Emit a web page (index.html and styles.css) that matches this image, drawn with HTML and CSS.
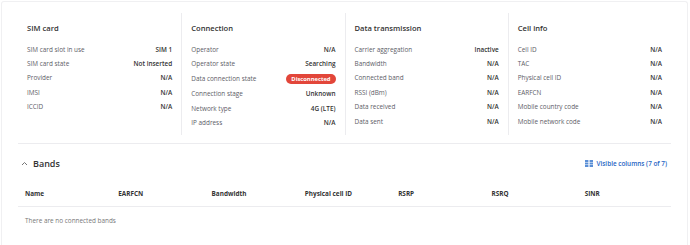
FILE: index.html
```html
<!DOCTYPE html>
<html>
<head>
<meta charset="utf-8">
<link rel="stylesheet" href="styles.css">
</head>
<body>
<div class="card">
  <div class="info-grid">
    <div class="col">
      <div class="col-title">SIM card</div>
      <div class="row"><span class="lbl">SIM card slot in use</span><span class="val">SIM 1</span></div>
      <div class="row"><span class="lbl">SIM card state</span><span class="val">Not inserted</span></div>
      <div class="row"><span class="lbl">Provider</span><span class="val">N/A</span></div>
      <div class="row"><span class="lbl">IMSI</span><span class="val">N/A</span></div>
      <div class="row"><span class="lbl">ICCID</span><span class="val">N/A</span></div>
    </div>
    <div class="col">
      <div class="col-title">Connection</div>
      <div class="row"><span class="lbl">Operator</span><span class="val">N/A</span></div>
      <div class="row"><span class="lbl">Operator state</span><span class="val">Searching</span></div>
      <div class="row row-pill"><span class="lbl">Data connection state</span><span class="pill">Disconnected</span></div>
      <div class="row"><span class="lbl">Connection stage</span><span class="val">Unknown</span></div>
      <div class="row"><span class="lbl">Network type</span><span class="val">4G (LTE)</span></div>
      <div class="row"><span class="lbl">IP address</span><span class="val">N/A</span></div>
    </div>
    <div class="col">
      <div class="col-title">Data transmission</div>
      <div class="row"><span class="lbl">Carrier aggregation</span><span class="val">Inactive</span></div>
      <div class="row"><span class="lbl">Bandwidth</span><span class="val">N/A</span></div>
      <div class="row"><span class="lbl">Connected band</span><span class="val">N/A</span></div>
      <div class="row"><span class="lbl">RSSI (dBm)</span><span class="val">N/A</span></div>
      <div class="row"><span class="lbl">Data received</span><span class="val">N/A</span></div>
      <div class="row"><span class="lbl">Data sent</span><span class="val">N/A</span></div>
    </div>
    <div class="col">
      <div class="col-title">Cell info</div>
      <div class="row"><span class="lbl">Cell ID</span><span class="val">N/A</span></div>
      <div class="row"><span class="lbl">TAC</span><span class="val">N/A</span></div>
      <div class="row"><span class="lbl">Physical cell ID</span><span class="val">N/A</span></div>
      <div class="row"><span class="lbl">EARFCN</span><span class="val">N/A</span></div>
      <div class="row"><span class="lbl">Mobile country code</span><span class="val">N/A</span></div>
      <div class="row"><span class="lbl">Mobile network code</span><span class="val">N/A</span></div>
    </div>
  </div>

  <div class="bands">
    <div class="bands-head">
      <div class="bands-title">
        <svg class="chev" width="7" height="5" viewBox="0 0 7 5"><path d="M1 4 L3.5 1.5 L6 4" fill="none" stroke="#666" stroke-width="0.9"/></svg>
        <span>Bands</span>
      </div>
      <a class="vis-cols">
        <svg width="8" height="7" viewBox="0 0 8 7">
          <rect x="0" y="0" width="3.4" height="2" fill="#5b8fd6"/>
          <rect x="0" y="2.5" width="3.4" height="2" fill="#5b8fd6"/>
          <rect x="0" y="5" width="3.4" height="2" fill="#5b8fd6"/>
          <rect x="4.6" y="0" width="3.4" height="2" fill="#5b8fd6"/>
          <rect x="4.6" y="2.5" width="3.4" height="2" fill="#5b8fd6"/>
          <rect x="4.6" y="5" width="3.4" height="2" fill="#5b8fd6"/>
        </svg>
        <span>Visible columns (7 of 7)</span>
      </a>
    </div>
    <div class="tbl">
      <div class="th">Name</div>
      <div class="th">EARFCN</div>
      <div class="th">Bandwidth</div>
      <div class="th">Physical cell ID</div>
      <div class="th">RSRP</div>
      <div class="th">RSRQ</div>
      <div class="th">SINR</div>
      <div class="empty">There are no connected bands</div>
    </div>
  </div>
</div>
</body>
</html>
```

FILE: styles.css
```css
html, body {
  margin: 0;
  padding: 0;
  background: #ffffff;
}
body {
  font-family: "Open Sans", "Liberation Sans", sans-serif;
  color: #333;
  padding: 1px 0 0 1px;
}
.card {
  width: 687px;
  height: 244px;
  box-sizing: border-box;
  border: 1px solid #f0f0f2;
  border-bottom: none;
  border-radius: 3px 3px 0 0;
  background: #fff;
  padding: 11px 16px 0 16px;
  overflow: hidden;
}
.info-grid {
  display: grid;
  grid-template-columns: repeat(4, 1fr);
  padding-bottom: 8px;
  border-bottom: 1px solid #ececef;
}
.col {
  padding: 10px 9px 5px 9px;
}
.col + .col {
  border-left: 1px solid #ececef;
}
.col-title {
  font-size: 7.6px;
  font-weight: 600;
  line-height: 10px;
  color: #333;
  margin-bottom: 9px;
}
.row {
  display: flex;
  justify-content: space-between;
  align-items: center;
  height: 14.4px;
  font-size: 6.4px;
}
.row-pill {
  height: 16px;
}
.lbl {
  color: #5c5c66;
}
.val {
  font-weight: 600;
  color: #333;
}
.pill {
  background: #e2463a;
  color: #fff;
  font-weight: 700;
  font-size: 5.8px;
  line-height: 10px;
  height: 10px;
  padding: 0 5px;
  border-radius: 6px;
}
.bands-head {
  display: flex;
  justify-content: space-between;
  align-items: center;
  height: 40px;
}
.bands-title {
  display: flex;
  align-items: center;
  gap: 5px;
  padding-left: 3px;
  font-size: 9px;
  font-weight: 600;
  color: #333;
}
.chev {
  margin-top: -1px;
}
.vis-cols {
  display: flex;
  align-items: center;
  gap: 4px;
  color: #1f64c4;
  font-size: 6.4px;
  font-weight: 600;
  padding-right: 4px;
}
.tbl {
  display: grid;
  grid-template-columns: repeat(7, 1fr);
}
.th {
  font-size: 6.4px;
  font-weight: 700;
  color: #333;
  height: 22px;
  line-height: 20px;
  padding-left: 7px;
  border-bottom: 1px solid #ececef;
}
.empty {
  grid-column: 1 / -1;
  font-size: 6.4px;
  color: #777;
  padding-left: 7px;
  height: 28px;
  line-height: 28px;
}
```
